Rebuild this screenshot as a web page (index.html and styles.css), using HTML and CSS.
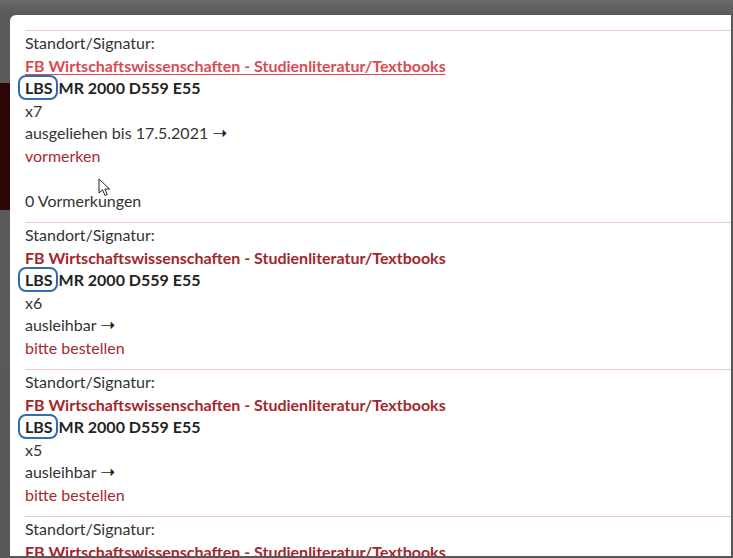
FILE: index.html
```html
<!DOCTYPE html>
<html lang="de">
<head>
    <meta charset="UTF-8">
    <meta name="viewport" content="width=device-width, initial-scale=1.0">
    <title>Exemplare</title>
    <link rel="stylesheet" href="styles.css">
</head>
<body>
    <div class="screen">
        <!-- Seite hinter dem Overlay -->
        <div class="backdrop">
            <div class="page-bar"></div>
        </div>
        <div class="modal">
            <!-- Exemplar 1 -->
            <div class="copy">
                <div>Standort/Signatur:</div>
                <div><a class="location hover" href="#">FB Wirtschaftswissenschaften - Studienliteratur/Textbooks</a></div>
                <div class="signature"><span class="mark">LBS</span> MR 2000 D559 E55</div>
                <div>x7</div>
                <div>ausgeliehen bis 17.5.2021 <span class="arrow">➝</span></div>
                <div><a class="action" href="#">vormerken</a></div>
                <div class="blank"></div>
                <div>0 Vormerkungen</div>
            </div>
            <!-- Exemplar 2 -->
            <div class="copy">
                <div>Standort/Signatur:</div>
                <div><a class="location" href="#">FB Wirtschaftswissenschaften - Studienliteratur/Textbooks</a></div>
                <div class="signature"><span class="mark">LBS</span> MR 2000 D559 E55</div>
                <div>x6</div>
                <div>ausleihbar <span class="arrow">➝</span></div>
                <div><a class="action" href="#">bitte bestellen</a></div>
            </div>
            <!-- Exemplar 3 -->
            <div class="copy">
                <div>Standort/Signatur:</div>
                <div><a class="location" href="#">FB Wirtschaftswissenschaften - Studienliteratur/Textbooks</a></div>
                <div class="signature"><span class="mark">LBS</span> MR 2000 D559 E55</div>
                <div>x5</div>
                <div>ausleihbar <span class="arrow">➝</span></div>
                <div><a class="action" href="#">bitte bestellen</a></div>
            </div>
            <!-- Exemplar 4 (abgeschnitten) -->
            <div class="copy">
                <div>Standort/Signatur:</div>
                <div><a class="location" href="#">FB Wirtschaftswissenschaften - Studienliteratur/Textbooks</a></div>
                <div class="signature"><span class="mark">LBS</span> MR 2000 D559 E55</div>
                <div>x4</div>
            </div>
            <!-- Mauszeiger -->
            <svg class="cursor" width="14" height="20" viewBox="0 0 14 20">
                <path d="M1 1 L1 15 L4.5 11.8 L7 17.5 L9.3 16.5 L6.9 11 L11.5 11 Z" fill="#fff" stroke="#222" stroke-width="1" stroke-linejoin="round"/>
            </svg>
        </div>
    </div>
</body>
</html>
```

FILE: styles.css
```css
html, body {
    margin: 0;
    padding: 0;
}
body {
    background: linear-gradient(#6a6a6a, #5a5a5a 14px, #585858);
    font-family: Lato, "Open Sans", sans-serif;
    font-size: 16px;
    line-height: 22.5px;
    color: #333;
    overflow: hidden;
}
.screen {
    display: flex;
    align-items: flex-start;
    height: 558px;
}
.backdrop {
    width: 10px;
    flex-shrink: 0;
    align-self: stretch;
    padding-top: 83px;
    box-sizing: border-box;
}
.page-bar {
    height: 127px;
    background-color: #2c0607;
}
.modal {
    position: relative;
    margin-top: 15px;
    width: 721px;
    height: 541px;
    padding: 15px 0 0 15px;
    box-sizing: border-box;
    background-color: #fff;
    border-top-left-radius: 6px;
    overflow: hidden;
}
.copy {
    border-top: 1px solid #efc7ca;
    padding-top: 1px;
    margin-bottom: 10px;
}
.copy div {
    height: 22.5px;
    white-space: nowrap;
}
.location {
    font-weight: 700;
    color: #a3262c;
    text-decoration: none;
}
/* erster Link steht unter dem Mauszeiger */
.location.hover {
    color: #db4a53;
    text-decoration: underline;
    text-underline-offset: 2px;
}
.signature {
    font-weight: 700;
    color: #222;
}
.mark {
    border: 2px solid #2f6ead;
    border-radius: 8px;
    padding: 1px 3px 1px 5px;
    margin-left: -7px;
    margin-right: -3px;
}
.arrow {
    font-family: "DejaVu Sans", sans-serif;
    font-size: 18px;
    line-height: 1;
    color: #222;
}
.action {
    color: #a8282f;
    text-decoration: none;
}
.cursor {
    position: absolute;
    left: 88px;
    top: 163px;
}
```
